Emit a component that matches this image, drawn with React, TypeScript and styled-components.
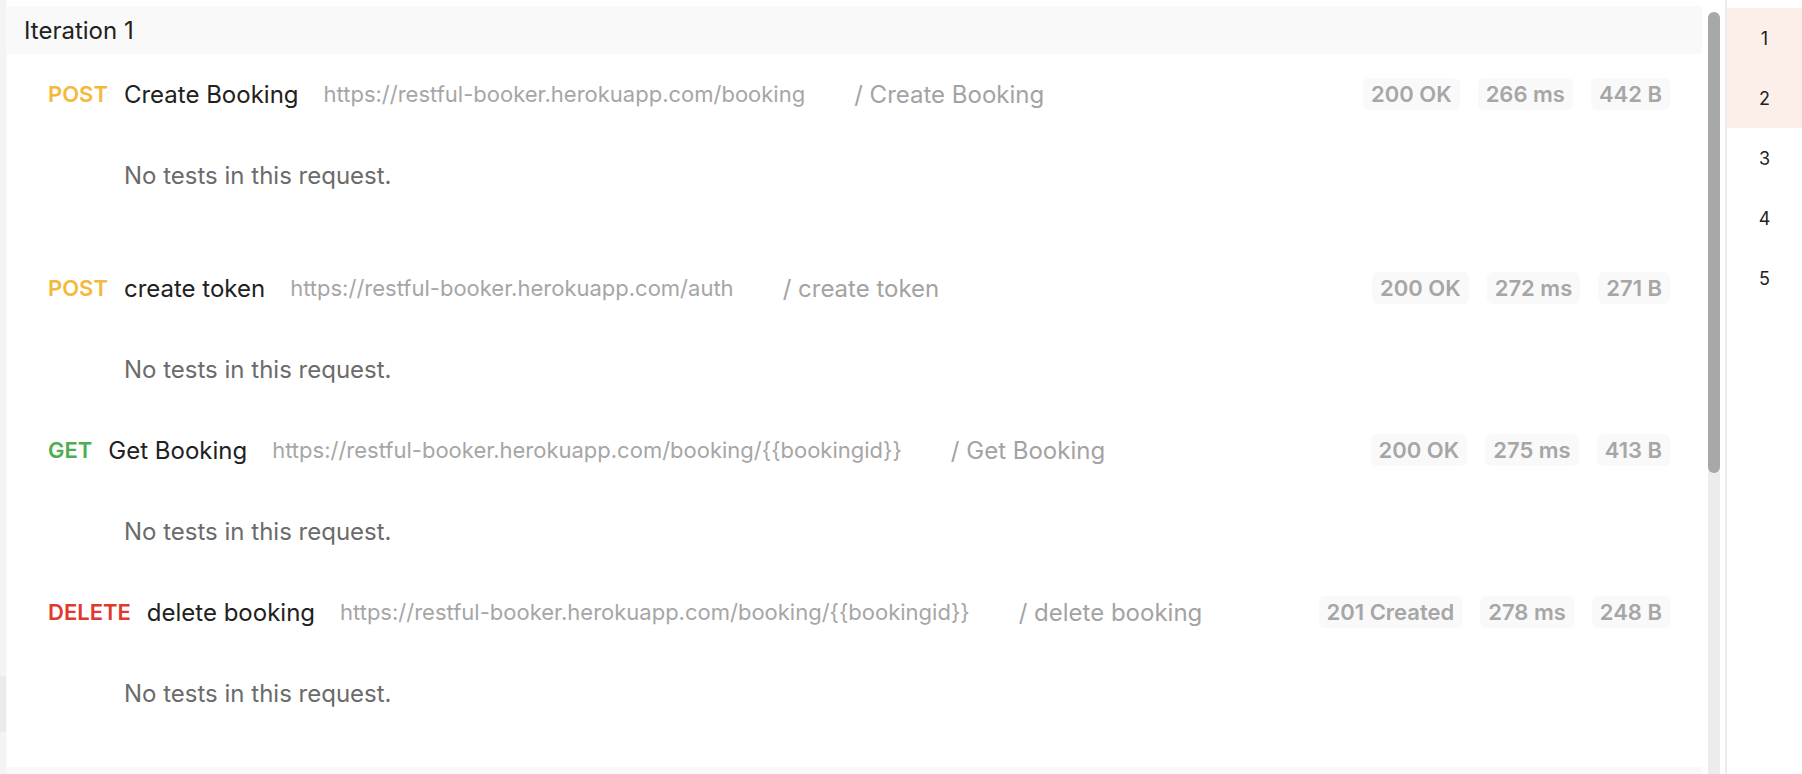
import React from 'react';
import styled, { createGlobalStyle } from 'styled-components';

type Method = 'GET' | 'POST' | 'DELETE';

interface RequestResult {
  id: number;
  method: Method;
  name: string;
  url: string;
  status: string;
  time: string;
  size: string;
}

const requests: RequestResult[] = [
  {
    id: 1,
    method: 'POST',
    name: 'Create Booking',
    url: 'https://restful-booker.herokuapp.com/booking',
    status: '200 OK',
    time: '266 ms',
    size: '442 B',
  },
  {
    id: 2,
    method: 'POST',
    name: 'create token',
    url: 'https://restful-booker.herokuapp.com/auth',
    status: '200 OK',
    time: '272 ms',
    size: '271 B',
  },
  {
    id: 3,
    method: 'GET',
    name: 'Get Booking',
    url: 'https://restful-booker.herokuapp.com/booking/{{bookingid}}',
    status: '200 OK',
    time: '275 ms',
    size: '413 B',
  },
  {
    id: 4,
    method: 'DELETE',
    name: 'delete booking',
    url: 'https://restful-booker.herokuapp.com/booking/{{bookingid}}',
    status: '201 Created',
    time: '278 ms',
    size: '248 B',
  },
];

const methodColors: Record<Method, string> = {
  GET: '#4cae50',
  POST: '#f5b83d',
  DELETE: '#e0382c',
};

const iterations = [1, 2, 3, 4, 5];

const App = () => {
  return (
    <>
      <GlobalStyle />
      <Page>
        <LeftStrip>
          <StripBlock />
        </LeftStrip>

        <Main>
          <IterationHeader>Iteration 1</IterationHeader>
          <RequestList>
            {requests.map((req, i) => (
              <RequestBlock key={req.id} $extra={i === 0 ? 32 : 0}>
                <RequestRow>
                  <MethodLabel $color={methodColors[req.method]}>{req.method}</MethodLabel>
                  <RequestName>{req.name}</RequestName>
                  <RequestUrl>{req.url}</RequestUrl>
                  <RequestPath>/ {req.name}</RequestPath>
                  <Stats>
                    <Badge>{req.status}</Badge>
                    <Badge>{req.time}</Badge>
                    <Badge>{req.size}</Badge>
                  </Stats>
                </RequestRow>
                <TestsNote>No tests in this request.</TestsNote>
              </RequestBlock>
            ))}
          </RequestList>
          <NextIteration />
        </Main>

        <ScrollColumn>
          <ScrollTrack>
            <ScrollThumb />
          </ScrollTrack>
        </ScrollColumn>

        <SideNav>
          {iterations.map((n) => (
            <NavItem key={n} $active={n <= 2}>
              {n}
            </NavItem>
          ))}
        </SideNav>
      </Page>
    </>
  );
};

export default App;

const GlobalStyle = createGlobalStyle`
  * {
    margin: 0;
    padding: 0;
    box-sizing: border-box;
  }
  html, body {
    height: 100%;
  }
  body {
    font-family: Inter, 'Noto Sans', sans-serif;
    background-color: #ffffff;
    overflow: hidden;
  }
`;

const Page = styled.div`
  display: flex;
  height: 100vh;
  overflow: hidden;
`;

const LeftStrip = styled.div`
  width: 7px;
  flex-shrink: 0;
  background-color: #f4f4f4;
  border-right: 1px solid #f9f9f9;
  display: flex;
  flex-direction: column;
  justify-content: flex-end;
  padding-bottom: 42px;
`;

const StripBlock = styled.div`
  height: 56px;
  background-color: #ebebeb;
`;

const Main = styled.div`
  flex: 1;
  min-width: 0;
  display: flex;
  flex-direction: column;
  padding-top: 6px;
  overflow: hidden;
`;

const IterationHeader = styled.div`
  height: 48px;
  flex-shrink: 0;
  display: flex;
  align-items: center;
  padding-left: 17px;
  background-color: #f9f9f9;
  font-size: 24px;
  color: #212121;
`;

const NextIteration = styled.div`
  height: 48px;
  flex-shrink: 0;
  background-color: #f9f9f9;
`;

const RequestList = styled.div`
  display: flex;
  flex-direction: column;
  gap: 48px;
  padding: 24px 32px 57px 41px;
`;

const RequestBlock = styled.div<{ $extra: number }>`
  display: flex;
  flex-direction: column;
  padding-bottom: ${(p) => p.$extra}px;
`;

const RequestRow = styled.div`
  display: flex;
  align-items: center;
  height: 32px;
  white-space: nowrap;
`;

const MethodLabel = styled.span<{ $color: string }>`
  font-size: 22px;
  font-weight: 600;
  color: ${(p) => p.$color};
  margin-right: 16px;
`;

const RequestName = styled.span`
  font-size: 24px;
  color: #212121;
  margin-right: 25px;
`;

const RequestUrl = styled.span`
  font-size: 22px;
  color: #a6a6a6;
  margin-right: 49px;
`;

const RequestPath = styled.span`
  font-size: 24px;
  color: #a3a3a3;
`;

const Stats = styled.div`
  margin-left: auto;
  display: flex;
  gap: 18px;
`;

const Badge = styled.span`
  height: 32px;
  display: flex;
  align-items: center;
  padding: 0 8px;
  border-radius: 6px;
  background-color: #f9f9f9;
  color: #a6a6a6;
  font-size: 22px;
  font-weight: 600;
`;

const TestsNote = styled.div`
  margin-top: 50px;
  padding-left: 76px;
  line-height: 32px;
  font-size: 24px;
  color: #6b6b6b;
`;

const ScrollColumn = styled.div`
  width: 12px;
  flex-shrink: 0;
  margin: 0 5px 0 6px;
  padding-top: 12px;
  display: flex;
  flex-direction: column;
`;

const ScrollTrack = styled.div`
  flex: 1;
  background-color: #ececec;
  border-radius: 6px 6px 0 0;
`;

const ScrollThumb = styled.div`
  height: 461px;
  border-radius: 6px;
  background-color: #a8a8a8;
`;

const SideNav = styled.div`
  width: 77px;
  flex-shrink: 0;
  border-left: 2px solid #ececec;
  padding-top: 8px;
`;

const NavItem = styled.div<{ $active: boolean }>`
  height: 60px;
  display: flex;
  align-items: center;
  justify-content: center;
  font-size: 18px;
  color: #212121;
  background-color: ${(p) => (p.$active ? '#fcefea' : 'transparent')};
`;
